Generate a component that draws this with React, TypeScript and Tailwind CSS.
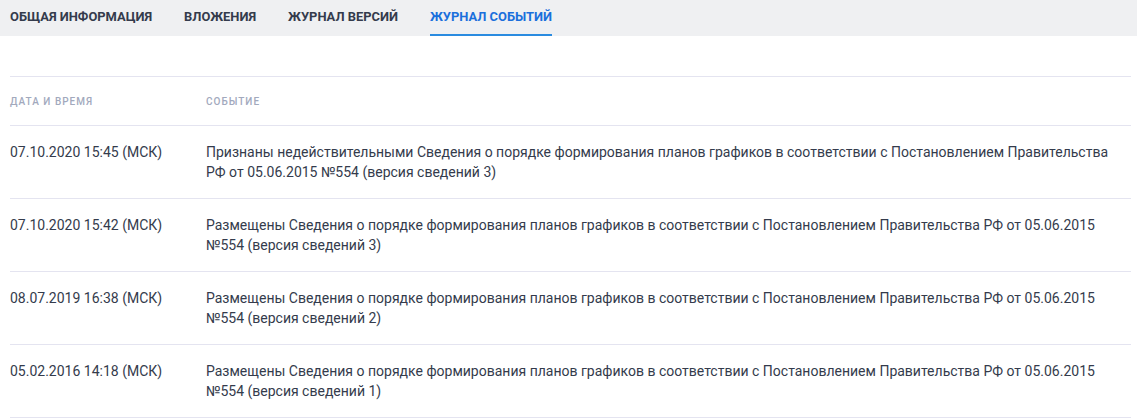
import { FC } from "react"

const tabs = [
  { title: "Общая информация", active: false },
  { title: "Вложения", active: false },
  { title: "Журнал версий", active: false },
  { title: "Журнал событий", active: true }
]

const events = [
  {
    date: "07.10.2020 15:45 (МСК)",
    text: "Признаны недействительными Сведения о порядке формирования планов графиков в соответствии с Постановлением Правительства РФ от 05.06.2015 №554 (версия сведений 3)"
  },
  {
    date: "07.10.2020 15:42 (МСК)",
    text: "Размещены Сведения о порядке формирования планов графиков в соответствии с Постановлением Правительства РФ от 05.06.2015 №554 (версия сведений 3)"
  },
  {
    date: "08.07.2019 16:38 (МСК)",
    text: "Размещены Сведения о порядке формирования планов графиков в соответствии с Постановлением Правительства РФ от 05.06.2015 №554 (версия сведений 2)"
  },
  {
    date: "05.02.2016 14:18 (МСК)",
    text: "Размещены Сведения о порядке формирования планов графиков в соответствии с Постановлением Правительства РФ от 05.06.2015 №554 (версия сведений 1)"
  }
]

const App: FC = () => {
  return (
    <div className="min-h-[420px] bg-white font-['Roboto',sans-serif]">
      {/* Tabs */}
      <div className="flex h-9 gap-x-8 bg-[#eff0f2] px-2.5">
        {tabs.map((tab) => (
          <div
            key={tab.title}
            className={`flex items-center border-b-2 text-[12.9px] font-bold uppercase ${
              tab.active
                ? "border-[#2a8be0] text-[#1a6fdc]"
                : "border-transparent text-[#343b4c]"
            }`}
          >
            {tab.title}
          </div>
        ))}
      </div>

      {/* Events table */}
      <div className="mt-10 pl-2.5 pr-1.5">
        <div className="flex h-[50px] items-center border-y border-[#e4e4f0] text-[10px] font-medium uppercase tracking-[1px] text-[#a2a9bd]">
          <div className="w-[196px] shrink-0">Дата и время</div>
          <div>Событие</div>
        </div>
        {events.map((event) => (
          <div
            key={event.date + event.text}
            className="flex border-b border-[#e4e4f0] py-4 text-sm leading-5 text-[#343b4c]"
          >
            <div className="w-[196px] shrink-0">{event.date}</div>
            <div className="pr-5">{event.text}</div>
          </div>
        ))}
      </div>
    </div>
  )
}

export default App
